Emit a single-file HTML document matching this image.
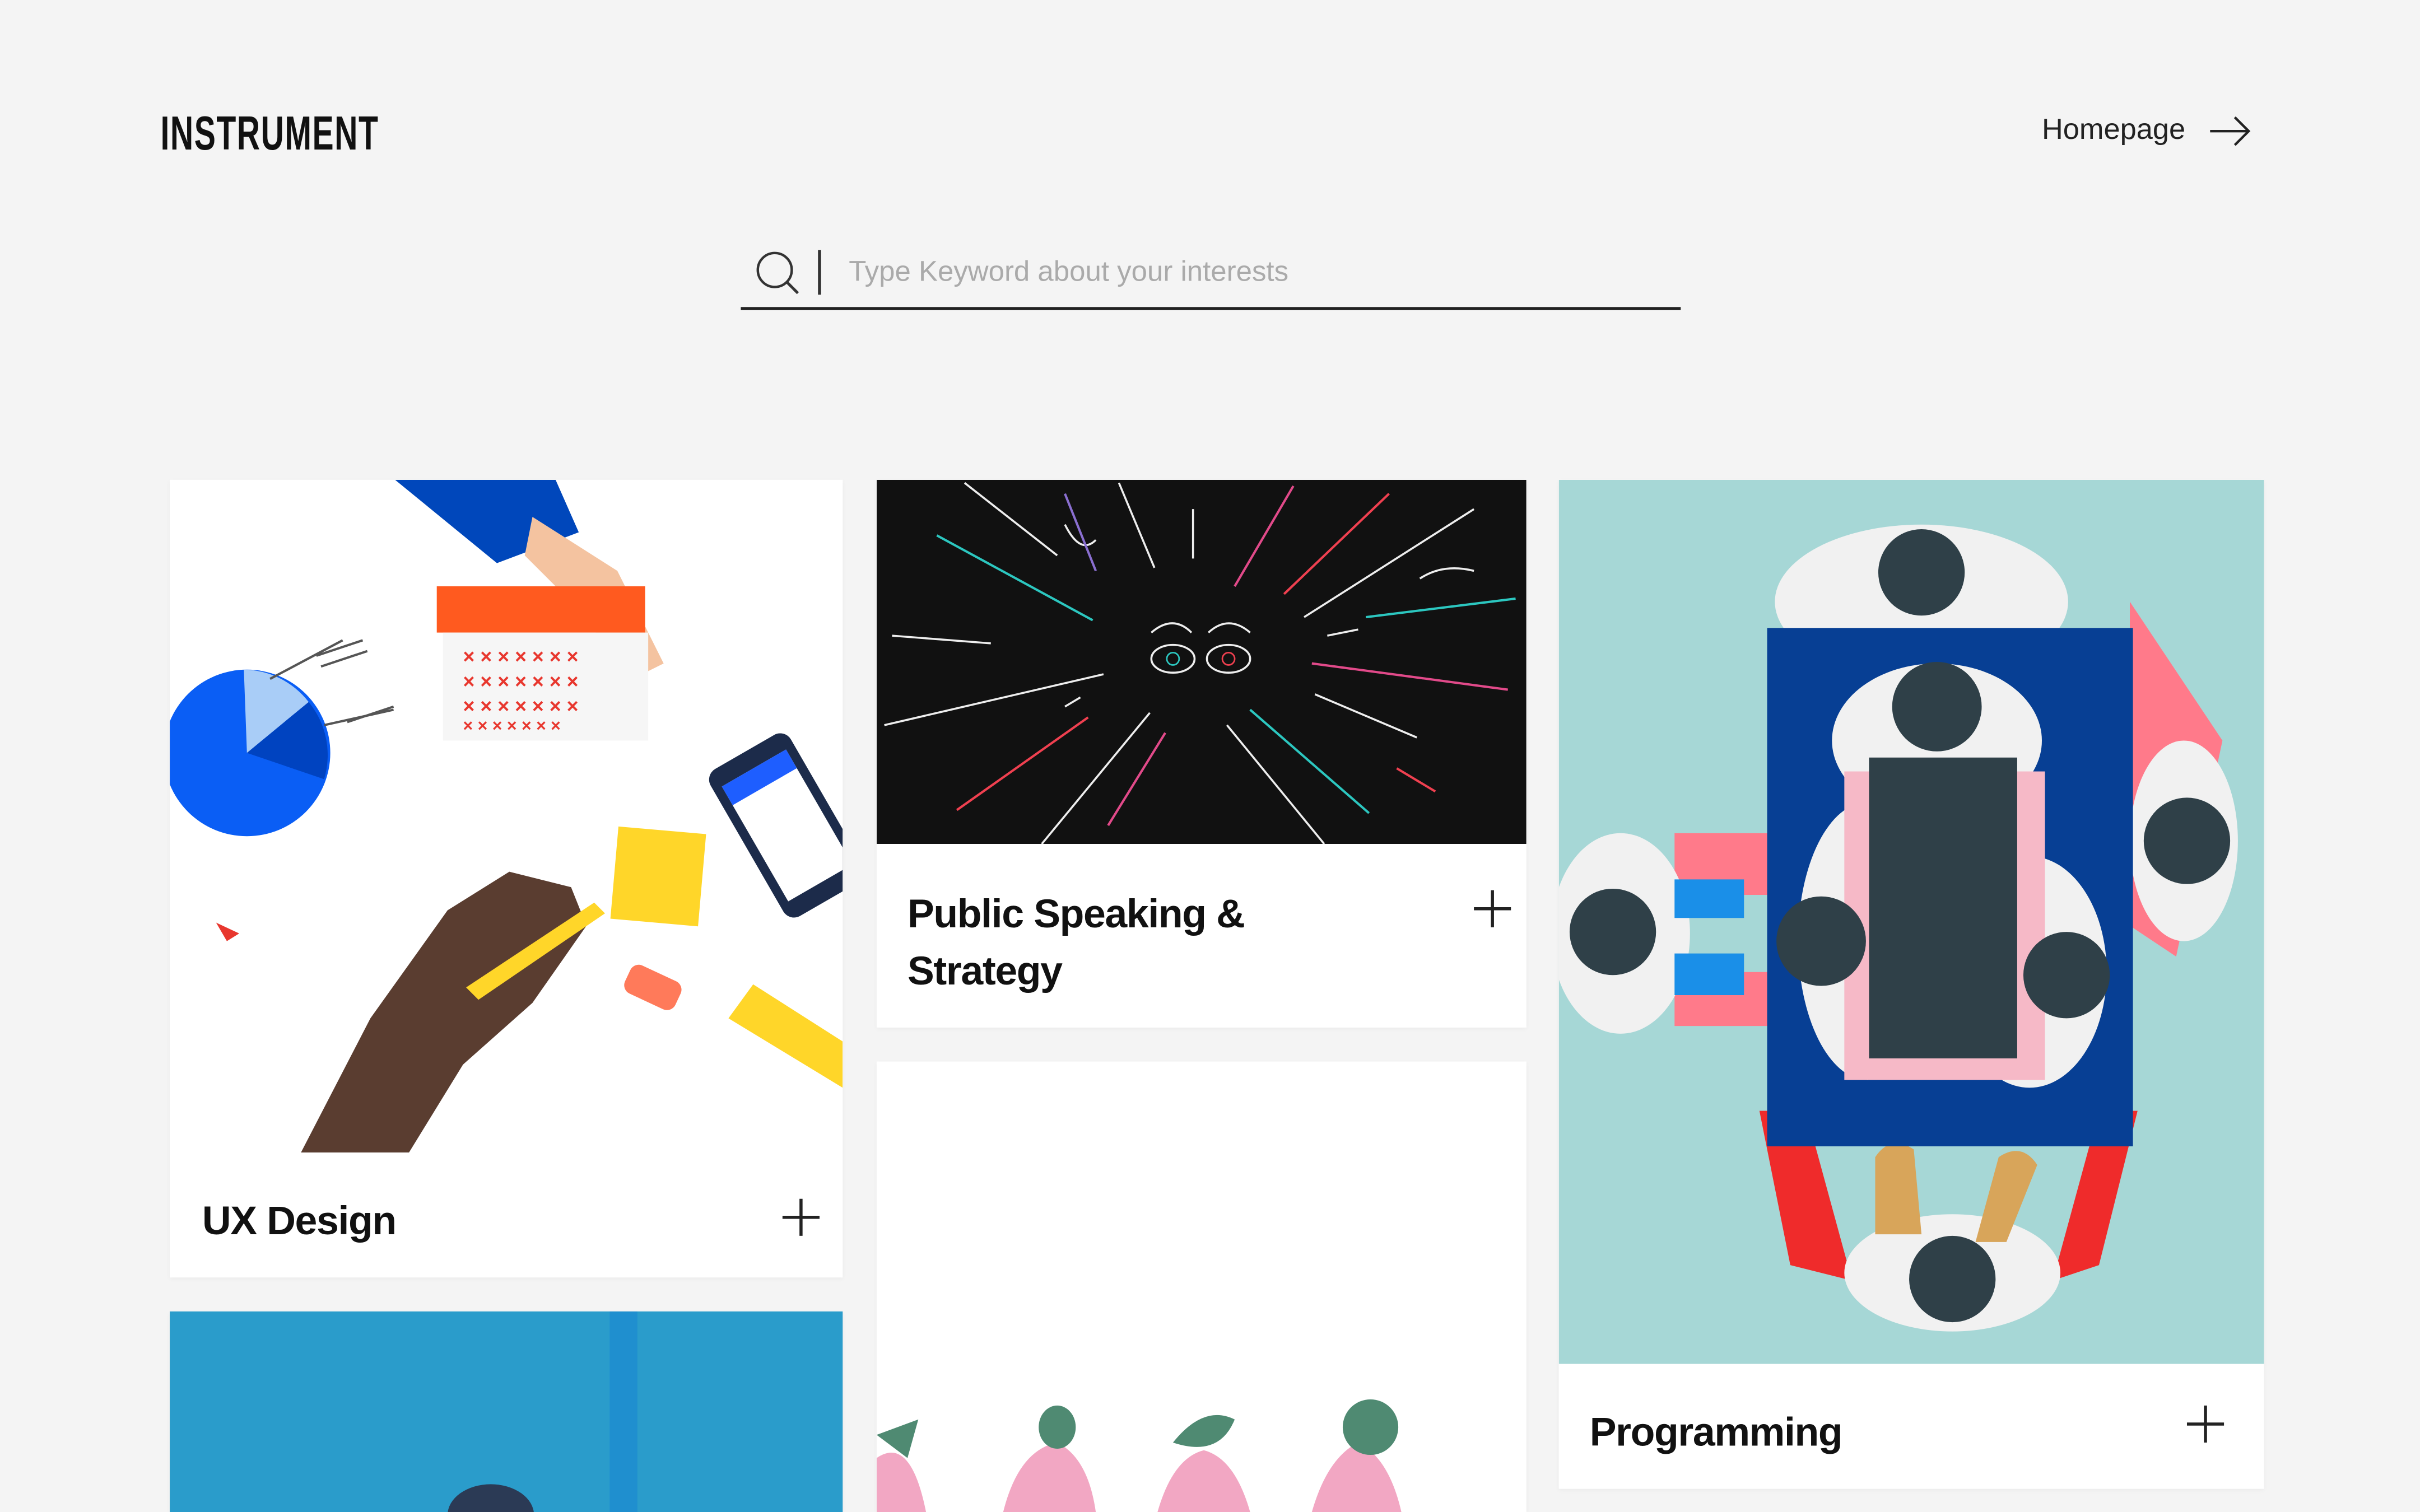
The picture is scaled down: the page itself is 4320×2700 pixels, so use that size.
<!DOCTYPE html>
<html><head><meta charset="utf-8"><style>
html,body{margin:0;padding:0;background:#f4f4f4;width:4320px;height:2700px;overflow:hidden}
#w{position:absolute;left:0;top:0;width:1568px;height:980px;transform:scale(2.7551);transform-origin:0 0;font-family:"Liberation Sans",sans-serif}
.a{position:absolute}
.card{position:absolute;background:#fff;overflow:hidden;box-shadow:0 1px 3px rgba(0,0,0,.04)}
.t{position:absolute;font-size:26px;font-weight:bold;color:#111;letter-spacing:-0.5px;line-height:37px}
.plus{position:absolute;width:24px;height:24px}
.plus:before{content:"";position:absolute;left:11px;top:0;width:1.5px;height:24px;background:#222}
.plus:after{content:"";position:absolute;top:11px;left:0;height:1.5px;width:24px;background:#222}
</style></head><body><div id="w">
<div class="a" style="left:104px;top:69px;font-size:31px;font-weight:bold;color:#111;transform:scaleX(0.67);transform-origin:0 0;letter-spacing:0.8px">INSTRUMENT</div>
<div class="a" style="left:1323px;top:74px;font-size:19px;color:#222">Homepage</div>
<svg class="a" style="left:1431px;top:74px" width="28" height="22"><path d="M1 11H26M17 2L26 11L17 20" stroke="#222" stroke-width="1.6" fill="none"/></svg>
<svg class="a" style="left:488px;top:161px" width="32" height="32"><circle cx="14" cy="14" r="11" stroke="#333" stroke-width="1.6" fill="none"/><path d="M22 22L29 29" stroke="#333" stroke-width="1.8"/></svg>
<div class="a" style="left:530px;top:162px;width:1.5px;height:29px;background:#333"></div>
<div class="a" style="left:550px;top:165px;font-size:18.5px;color:#aaa">Type Keyword about your interests</div>
<div class="a" style="left:480px;top:199px;width:609px;height:2px;background:#222"></div>

<!-- card 1 -->
<div class="card" style="left:110px;top:311px;width:436px;height:517px">
<svg width="436" height="436" viewBox="110 311 436 436">
<rect x="110" y="311" width="436" height="436" fill="#fff"/>
<path d="M256 311H360L375 345L322 365Z" fill="#0047bb"/>
<path d="M345 335L400 370L430 430L410 440L370 390L340 360Z" fill="#f4c3a0"/>
<rect x="283" y="380" width="135" height="30" fill="#ff5a1f"/>
<rect x="287" y="410" width="133" height="70" fill="#f6f6f6"/>
<g fill="#e8372e" font-size="13" font-weight="bold"><text x="300" y="430">× × × × × × ×</text><text x="300" y="446">× × × × × × ×</text><text x="300" y="462">× × × × × × ×</text><text x="300" y="474" font-size="11">× × × × × × ×</text></g>
<circle cx="160" cy="488" r="54" fill="#0a5ef5"/>
<path d="M160 488L158 434A54 54 0 0 1 200 455Z" fill="#a9cdf7"/>
<path d="M160 488L200 455A54 54 0 0 1 210 505Z" fill="#0043c0"/>
<g stroke="#555" stroke-width="1.5"><path d="M175 440L222 415M205 425L235 415M208 432L238 422M210 470L255 460M225 468L255 458"/></g>
<g transform="rotate(-30 510 535)"><rect x="480" y="480" width="60" height="110" rx="8" fill="#1c2b4a"/><rect x="486" y="492" width="48" height="86" fill="#fff"/><rect x="486" y="492" width="48" height="14" fill="#1e5eff"/></g>
<path d="M195 747L240 660L290 590L330 565L370 575L380 600L345 650L300 690L265 747Z" fill="#5a3d30"/>
<path d="M302 640L385 585L392 592L310 648Z" fill="#ffd629"/>
<rect x="398" y="538" width="57" height="60" fill="#ffd629" transform="rotate(5 426 568)"/>
<path d="M472 660L546 705V675L488 638Z" fill="#ffd629"/>
<rect x="405" y="630" width="36" height="20" rx="6" fill="#ff7a5a" transform="rotate(25 423 640)"/>
<path d="M140 598L155 605L147 610Z" fill="#e8372e"/>
</svg>
<div class="t" style="left:21px;top:462px">UX Design</div>
<div class="plus" style="left:397px;top:466px"></div>
</div>

<!-- card 2 -->
<div class="card" style="left:568px;top:311px;width:421px;height:355px">
<svg width="421" height="236" viewBox="568 311 421 236">
<rect x="568" y="311" width="421" height="237" fill="#111"/>
<g stroke="#eee" stroke-width="1.3" fill="none">
<path d="M625 313L685 360M725 313L748 368M773 330V362M955 330L845 400M578 412L642 417M573 470L715 437M852 450L918 478M675 547L745 462M858 547L795 470M860 412L880 408M700 452L690 458"/>
<ellipse cx="760" cy="427" rx="14" ry="9"/><ellipse cx="796" cy="427" rx="14" ry="9"/>
<path d="M746 410Q760 398 772 410M783 410Q796 398 810 410M690 340Q700 360 710 350M920 375Q935 365 955 370"/></g>
<g stroke-width="1.5" fill="none"><path d="M607 347L708 402" stroke="#2cc7c0"/><path d="M800 380L838 315" stroke="#e24a8a"/><path d="M832 385L900 320" stroke="#f04050"/><path d="M885 400L982 388" stroke="#2cc7c0"/><path d="M850 430L977 447" stroke="#e24a8a"/><path d="M620 525L705 465" stroke="#f04050"/><path d="M718 535L755 475" stroke="#e24a8a"/><path d="M810 460L887 527" stroke="#2cc7c0"/><path d="M905 498L930 513" stroke="#f04050"/><path d="M690 320L710 370" stroke="#8a6fd0"/></g>
<circle cx="760" cy="427" r="4" stroke="#2cc7c0" fill="none"/><circle cx="796" cy="427" r="4" stroke="#f04050" fill="none"/>
</svg>
<div class="t" style="left:20px;top:263px;width:300px">Public Speaking &amp; Strategy</div>
<div class="plus" style="left:387px;top:266px"></div>
</div>

<!-- card 3 -->
<div class="card" style="left:568px;top:688px;width:421px;height:292px">
<svg width="421" height="292" viewBox="568 688 421 292">
<g fill="#f2a7c3"><path d="M568 945Q590 930 600 980H568Z"/><path d="M650 980Q660 940 685 935Q705 945 710 980Z"/><path d="M750 980Q760 945 780 940Q800 945 810 980Z"/><path d="M850 980Q860 945 880 935Q900 945 908 980Z"/></g>
<g fill="#4f8a72"><path d="M568 930L595 920L588 945Z"/><ellipse cx="685" cy="925" rx="12" ry="14"/><path d="M760 935Q780 910 800 920Q790 945 760 935Z"/><circle cx="888" cy="925" r="18"/></g>
</svg>
</div>

<!-- card 4 -->
<div class="card" style="left:1010px;top:311px;width:457px;height:654px">
<svg width="457" height="573" viewBox="1010 311 457 573">
<rect x="1010" y="311" width="457" height="573" fill="#a6d7d6"/>
<path d="M1380 390L1440 480L1410 620L1380 600Z" fill="#ff7a8a"/>
<path d="M1085 540H1150V580H1085ZM1085 630H1150V665H1085Z" fill="#ff7a8a"/>
<path d="M1140 720L1160 820L1200 830L1170 720ZM1385 720L1360 820L1330 830L1360 720Z" fill="#ef2b2b"/>
<ellipse cx="1245" cy="390" rx="95" ry="50" fill="#f1f1f1"/>
<ellipse cx="1050" cy="605" rx="45" ry="65" fill="#f1f1f1"/>
<ellipse cx="1415" cy="545" rx="35" ry="65" fill="#f1f1f1"/>
<ellipse cx="1265" cy="825" rx="70" ry="38" fill="#f1f1f1"/>
<path d="M1085 570H1130V595H1085ZM1085 618H1130V645H1085Z" fill="#1a8fe8"/>
<path d="M1215 750Q1225 735 1240 745L1245 800L1215 800ZM1295 750Q1310 740 1320 755L1300 805H1280Z" fill="#d8a55a"/>
<rect x="1145" y="407" width="237" height="336" fill="#073f94"/>
<ellipse cx="1255" cy="480" rx="68" ry="50" fill="#f1f1f1"/>
<ellipse cx="1210" cy="610" rx="45" ry="90" fill="#f1f1f1"/>
<ellipse cx="1315" cy="630" rx="50" ry="75" fill="#f1f1f1"/>
<rect x="1195" y="500" width="130" height="200" fill="#f6b9c7"/>
<rect x="1211" y="491" width="96" height="195" fill="#2f4048"/>
<g fill="#2f4048"><circle cx="1245" cy="371" r="28"/><circle cx="1255" cy="458" r="29"/><circle cx="1417" cy="545" r="28"/><circle cx="1045" cy="604" r="28"/><circle cx="1180" cy="610" r="29"/><circle cx="1339" cy="632" r="28"/><circle cx="1265" cy="829" r="28"/></g>
</svg>
<div class="t" style="left:20px;top:599px">Programming</div>
<div class="plus" style="left:407px;top:600px"></div>
</div>

<!-- card 5 -->
<div class="card" style="left:110px;top:850px;width:436px;height:130px;background:#2a9ccb">
<div class="a" style="left:285px;top:0;width:18px;height:130px;background:#1f8fcf"></div>
<div class="a" style="left:182px;top:115px;width:40px;height:40px;border-radius:50%;background:#fff"></div>
<div class="a" style="left:180px;top:112px;width:56px;height:40px;border-radius:50%;background:#2b3a55"></div>
</div>
</div></body></html>
